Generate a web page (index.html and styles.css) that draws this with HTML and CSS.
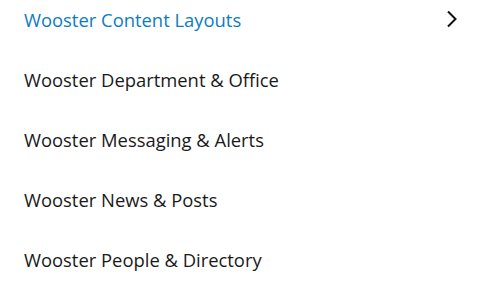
FILE: index.html
```html
<!DOCTYPE html>
<html>
<head>
<meta charset="utf-8">
<link rel="stylesheet" href="styles.css">
</head>
<body>
<ul class="menu">
  <li class="item active"><span class="label">Wooster Content Layouts</span>
    <svg class="chev" width="12" height="18" viewBox="0 0 12 18"><path d="M2 1.5 L9.5 9 L2 16.5" fill="none" stroke="#111" stroke-width="2"/></svg>
  </li>
  <li class="item"><span class="label">Wooster Department &amp; Office</span></li>
  <li class="item"><span class="label">Wooster Messaging &amp; Alerts</span></li>
  <li class="item"><span class="label">Wooster News &amp; Posts</span></li>
  <li class="item"><span class="label">Wooster People &amp; Directory</span></li>
</ul>
</body>
</html>
```
FILE: styles.css
```css
html, body {
  margin: 0;
  padding: 0;
  background: #fff;
}
.menu {
  list-style: none;
  margin: 0;
  padding: 0 0 0 24px;
  width: 471px;
  box-sizing: border-box;
  margin-top: -11px;
}
.item {
  display: flex;
  align-items: center;
  justify-content: space-between;
  height: 60px;
  padding-right: 13px;
  font-family: "Open Sans", sans-serif;
  font-size: 18.4px;
  color: #1a1a1a;
}
.item.active {
  color: #0b7dc1;
}
.chev {
  display: block;
}
```
